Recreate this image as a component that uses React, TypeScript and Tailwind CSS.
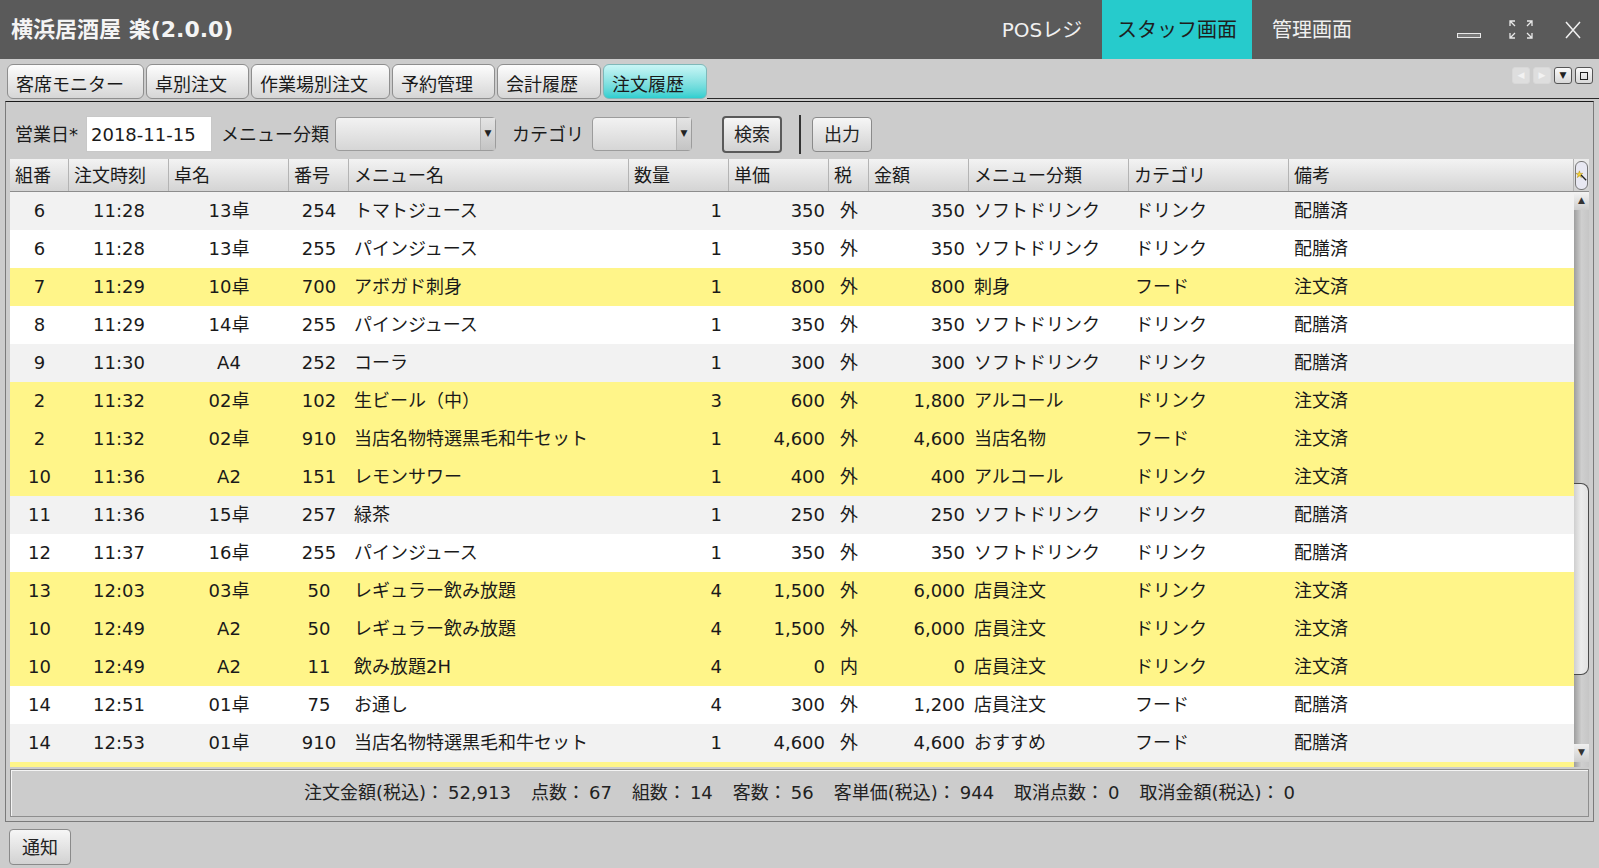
import React from 'react';

type Col = { label: string; w: string; cell: string };

const COLS: Col[] = [
  { label: '組番', w: 'w-[59px]', cell: 'justify-center' },
  { label: '注文時刻', w: 'w-[100px]', cell: 'justify-center' },
  { label: '卓名', w: 'w-[120px]', cell: 'justify-center' },
  { label: '番号', w: 'w-[60px]', cell: 'justify-center' },
  { label: 'メニュー名', w: 'w-[280px]', cell: 'justify-start pl-[5px]' },
  { label: '数量', w: 'w-[100px]', cell: 'justify-end pr-[7px]' },
  { label: '単価', w: 'w-[100px]', cell: 'justify-end pr-[4px]' },
  { label: '税', w: 'w-[40px]', cell: 'justify-center' },
  { label: '金額', w: 'w-[100px]', cell: 'justify-end pr-[4px]' },
  { label: 'メニュー分類', w: 'w-[160px]', cell: 'justify-start pl-[5px]' },
  { label: 'カテゴリ', w: 'w-[160px]', cell: 'justify-start pl-[6px]' },
  { label: '備考', w: 'w-[285px]', cell: 'justify-start pl-[5px]' },
];

const ROWS: string[][] = [
  ['6', '11:28', '13卓', '254', 'トマトジュース', '1', '350', '外', '350', 'ソフトドリンク', 'ドリンク', '配膳済'],
  ['6', '11:28', '13卓', '255', 'パインジュース', '1', '350', '外', '350', 'ソフトドリンク', 'ドリンク', '配膳済'],
  ['7', '11:29', '10卓', '700', 'アボガド刺身', '1', '800', '外', '800', '刺身', 'フード', '注文済'],
  ['8', '11:29', '14卓', '255', 'パインジュース', '1', '350', '外', '350', 'ソフトドリンク', 'ドリンク', '配膳済'],
  ['9', '11:30', 'A4', '252', 'コーラ', '1', '300', '外', '300', 'ソフトドリンク', 'ドリンク', '配膳済'],
  ['2', '11:32', '02卓', '102', '生ビール（中）', '3', '600', '外', '1,800', 'アルコール', 'ドリンク', '注文済'],
  ['2', '11:32', '02卓', '910', '当店名物特選黒毛和牛セット', '1', '4,600', '外', '4,600', '当店名物', 'フード', '注文済'],
  ['10', '11:36', 'A2', '151', 'レモンサワー', '1', '400', '外', '400', 'アルコール', 'ドリンク', '注文済'],
  ['11', '11:36', '15卓', '257', '緑茶', '1', '250', '外', '250', 'ソフトドリンク', 'ドリンク', '配膳済'],
  ['12', '11:37', '16卓', '255', 'パインジュース', '1', '350', '外', '350', 'ソフトドリンク', 'ドリンク', '配膳済'],
  ['13', '12:03', '03卓', '50', 'レギュラー飲み放題', '4', '1,500', '外', '6,000', '店員注文', 'ドリンク', '注文済'],
  ['10', '12:49', 'A2', '50', 'レギュラー飲み放題', '4', '1,500', '外', '6,000', '店員注文', 'ドリンク', '注文済'],
  ['10', '12:49', 'A2', '11', '飲み放題2H', '4', '0', '内', '0', '店員注文', 'ドリンク', '注文済'],
  ['14', '12:51', '01卓', '75', 'お通し', '4', '300', '外', '1,200', '店員注文', 'フード', '配膳済'],
  ['14', '12:53', '01卓', '910', '当店名物特選黒毛和牛セット', '1', '4,600', '外', '4,600', 'おすすめ', 'フード', '配膳済'],
];

const TABS = [
  { label: '客席モニター', w: 'w-[137px]' },
  { label: '卓別注文', w: 'w-[103px]' },
  { label: '作業場別注文', w: 'w-[139px]' },
  { label: '予約管理', w: 'w-[103px]' },
  { label: '会計履歴', w: 'w-[104px]' },
  { label: '注文履歴', w: 'w-[104px]', active: true },
];

const SUMMARY: [string, string][] = [
  ['注文金額(税込)', '52,913'],
  ['点数', '67'],
  ['組数', '14'],
  ['客数', '56'],
  ['客単価(税込)', '944'],
  ['取消点数', '0'],
  ['取消金額(税込)', '0'],
];

function rowBg(i: number, status: string) {
  if (status === '注文済') return 'bg-[#fff589]';
  return i % 2 === 0 ? 'bg-[#f2f2f2]' : 'bg-white';
}

function GrayButton({ children, className }: { children: React.ReactNode; className: string }) {
  return (
    <div
      className={
        'flex items-center justify-center rounded-[4px] bg-linear-to-b from-[#f6f6f6] to-[#d2d2d2] text-[18px] text-[#222] ' +
        className
      }
    >
      {children}
    </div>
  );
}

function SelectBox({ className }: { className: string }) {
  return (
    <div
      className={
        'flex h-[34px] rounded-[4px] border border-[#9c9c9c] bg-linear-to-b from-[#f2f2f2] to-[#d6d6d6] ' + className
      }
    >
      <div className="flex-1" />
      <div className="flex w-[15px] items-center justify-center border-l border-[#b4b4b4] bg-linear-to-b from-[#e4e4e4] to-[#c4c4c4] text-[9px] text-[#222]">
        ▼
      </div>
    </div>
  );
}

function MiniButton({ children, disabled }: { children: React.ReactNode; disabled?: boolean }) {
  return (
    <div
      className={
        'flex h-[17px] w-[18px] items-center justify-center rounded-[3px] border text-[9px] leading-none ' +
        (disabled
          ? 'border-[#d8d8d8] bg-[#dedede] text-[#f2f2f2]'
          : 'border-[#555] bg-linear-to-b from-[#fafafa] to-[#d8d8d8] text-[#222]')
      }
    >
      {children}
    </div>
  );
}

export default function App() {
  return (
    <div className="flex h-[868px] w-[1599px] flex-col overflow-hidden bg-[#cccccc] font-['DejaVu_Sans','Noto_Sans_CJK_JP',sans-serif] text-[#1a1a1a]">
      {/* title bar */}
      <div className="flex h-[59px] shrink-0 items-center bg-[#5a5a5a]">
        <div className="pl-[11px] text-[22px] font-bold leading-none text-[#f4f4f4]">横浜居酒屋 楽(2.0.0)</div>
        <div className="ml-auto flex h-full items-center">
          <div className="flex h-full w-[120px] items-center justify-center text-[20px] text-[#f0f0f0]">POSレジ</div>
          <div className="flex h-full w-[150px] items-center justify-center bg-[#26cbcc] text-[20px] text-[#1e1e1e]">
            スタッフ画面
          </div>
          <div className="flex h-full w-[120px] items-center justify-center text-[20px] text-[#f0f0f0]">管理画面</div>
          <div className="ml-[85px] flex h-full items-center">
            <svg width="24" height="6" viewBox="0 0 24 6" className="mt-[12px]">
              <rect x="0.5" y="0.5" width="23" height="4" fill="#7a7a7a" stroke="#e8e8e8" strokeWidth="1" />
            </svg>
            <svg width="24" height="19" viewBox="0 0 24 19" className="ml-[28px]" fill="none" stroke="#e8e8e8" strokeWidth="1.3">
              <path d="M1 6V1H6M1 1L6 6" />
              <path d="M18 1H23V6M23 1L18 6" />
              <path d="M1 13V18H6M1 18L6 13" />
              <path d="M18 18H23V13M23 18L18 13" />
            </svg>
            <svg width="16" height="18" viewBox="0 0 16 18" className="ml-[32px] mr-[18px]" stroke="#f0f0f0" strokeWidth="1.5">
              <path d="M1 1L15 17M15 1L1 17" />
            </svg>
          </div>
        </div>
      </div>

      {/* tabs */}
      <div className="flex h-[42px] shrink-0 items-start pl-[7px] pt-[5px]">
        <div className="flex gap-[2px]">
          {TABS.map((t) => (
            <div
              key={t.label}
              className={
                'flex h-[35px] items-center rounded-[6px] border pl-[8px] pt-[6px] text-[18px] leading-none ' +
                t.w +
                ' ' +
                (t.active
                  ? 'border-[#7fb8b9] bg-linear-to-b from-[#c8f6f6] to-[#2ccfd0] text-[#1a1a1a]'
                  : 'border-[#8e8e8e] bg-linear-to-b from-[#fdfdfd] to-[#d6d6d6] text-[#1a1a1a]')
              }
            >
              {t.label}
            </div>
          ))}
        </div>
        <div className="flex h-[35px] flex-1 items-start justify-end gap-[3px] border-b border-[#2a2a2a] pr-[6px] pt-[3px]">
          <MiniButton disabled>◀</MiniButton>
          <MiniButton disabled>▶</MiniButton>
          <MiniButton>▼</MiniButton>
          <MiniButton>
            <span className="block h-[8px] w-[8px] border border-[#222]" />
          </MiniButton>
        </div>
      </div>

      {/* panel */}
      <div className="mx-[5px] flex shrink-0 flex-col border border-[#7a7a7a] border-t-[#1a1a1a] pb-[4px]">
        {/* toolbar */}
        <div className="flex h-[56px] items-center pl-[9px] pt-[8px] text-[18px]">
          <span>営業日*</span>
          <div className="ml-[8px] flex h-[36px] w-[126px] items-center border border-[#c8c8c8] bg-white pl-[4px] text-[18px]">
            2018-11-15
          </div>
          <span className="ml-[9px]">メニュー分類</span>
          <SelectBox className="ml-[6px] w-[161px]" />
          <span className="ml-[16px]">カテゴリ</span>
          <SelectBox className="ml-[8px] w-[100px]" />
          <GrayButton className="ml-[30px] h-[37px] w-[60px] border-2 border-[#5a5a5a]">検索</GrayButton>
          <div className="ml-[17px] h-[39px] w-[2px] bg-[#333]" />
          <GrayButton className="ml-[11px] h-[35px] w-[60px] border border-[#8a8a8a]">出力</GrayButton>
        </div>

        {/* table */}
        <div className="mx-[4px] mt-[1px] flex">
          <div className="flex w-[1564px] flex-col">
            <div className="flex h-[33px] border-b border-[#8d8d8d] bg-linear-to-b from-[#f3f3f3] to-[#d4d4d4] text-[18px]">
              {COLS.map((c) => (
                <div key={c.label} className={'flex items-center border-r border-[#b4b4b4] pl-[5px] ' + c.w}>
                  {c.label}
                </div>
              ))}
            </div>
            <div className="flex h-[575px] flex-col overflow-hidden">
              {ROWS.map((r, i) => (
                <div key={i} className={'flex h-[38px] shrink-0 pb-[2px] text-[18px] ' + rowBg(i, r[11])}>
                  {COLS.map((c, j) => (
                    <div key={j} className={'flex items-center whitespace-nowrap ' + c.w + ' ' + c.cell}>
                      {r[j]}
                    </div>
                  ))}
                </div>
              ))}
              {/* next row peeking in at the bottom */}
              <div className="flex-1 bg-[#fff589]" />
            </div>
          </div>

          {/* scrollbar */}
          <div className="flex w-[17px] flex-col">
            <div className="flex h-[33px] items-center justify-center border-b border-[#8d8d8d] bg-linear-to-b from-[#ececec] to-[#d0d0d0]">
              <div className="flex h-[29px] w-[13px] items-center justify-center rounded-[6px] border border-[#777] bg-[#e8e8f2]">
                <svg width="13" height="13" viewBox="0 0 13 13">
                  <path d="M4 1L5 4L8 4L5.5 6L6.5 9L4 7L1.5 9L2.5 6L0 4L3 4Z" fill="#f6d433" stroke="#b08a10" strokeWidth="0.6" />
                  <path d="M6 6L12 12" stroke="#222" strokeWidth="1.6" />
                </svg>
              </div>
            </div>
            <div className="flex h-[575px] flex-col bg-linear-to-r from-[#9e9e9e] via-[#cfcfcf] to-[#c6c6c6]">
              <div className="flex h-[18px] items-center justify-center bg-linear-to-b from-[#f4f4f4] to-[#cdcdcd] text-[9px] text-[#333]">
                ▲
              </div>
              <div className="h-[273px]" />
              <div className="h-[192px] rounded-r-[8px] border border-l-0 border-[#4a4a4a] bg-linear-to-r from-[#cfcfcf] via-[#ececec] to-[#e2e2e2]" />
              <div className="flex-1" />
              <div className="flex h-[18px] items-center justify-center bg-linear-to-b from-[#f0f0f0] to-[#cdcdcd] text-[9px] text-[#333]">
                ▼
              </div>
              <div className="h-[5px]" />
            </div>
          </div>
        </div>

        {/* summary */}
        <div className="mx-[4px] mt-[2px] flex h-[48px] items-center justify-center gap-[20px] border border-[#8e8e8e] text-[18px] leading-none text-[#222] shadow-[inset_1px_1px_0_#f4f4f4]">
          {SUMMARY.map(([k, v]) => (
            <div key={k} className="flex items-center whitespace-nowrap">
              <span>{k}：</span>
              <span className="ml-[4px]">{v}</span>
            </div>
          ))}
        </div>
      </div>

      {/* footer */}
      <div className="pl-[9px] pt-[7px]">
        <GrayButton className="h-[36px] w-[62px] border border-[#8a8a8a]">通知</GrayButton>
      </div>
    </div>
  );
}
